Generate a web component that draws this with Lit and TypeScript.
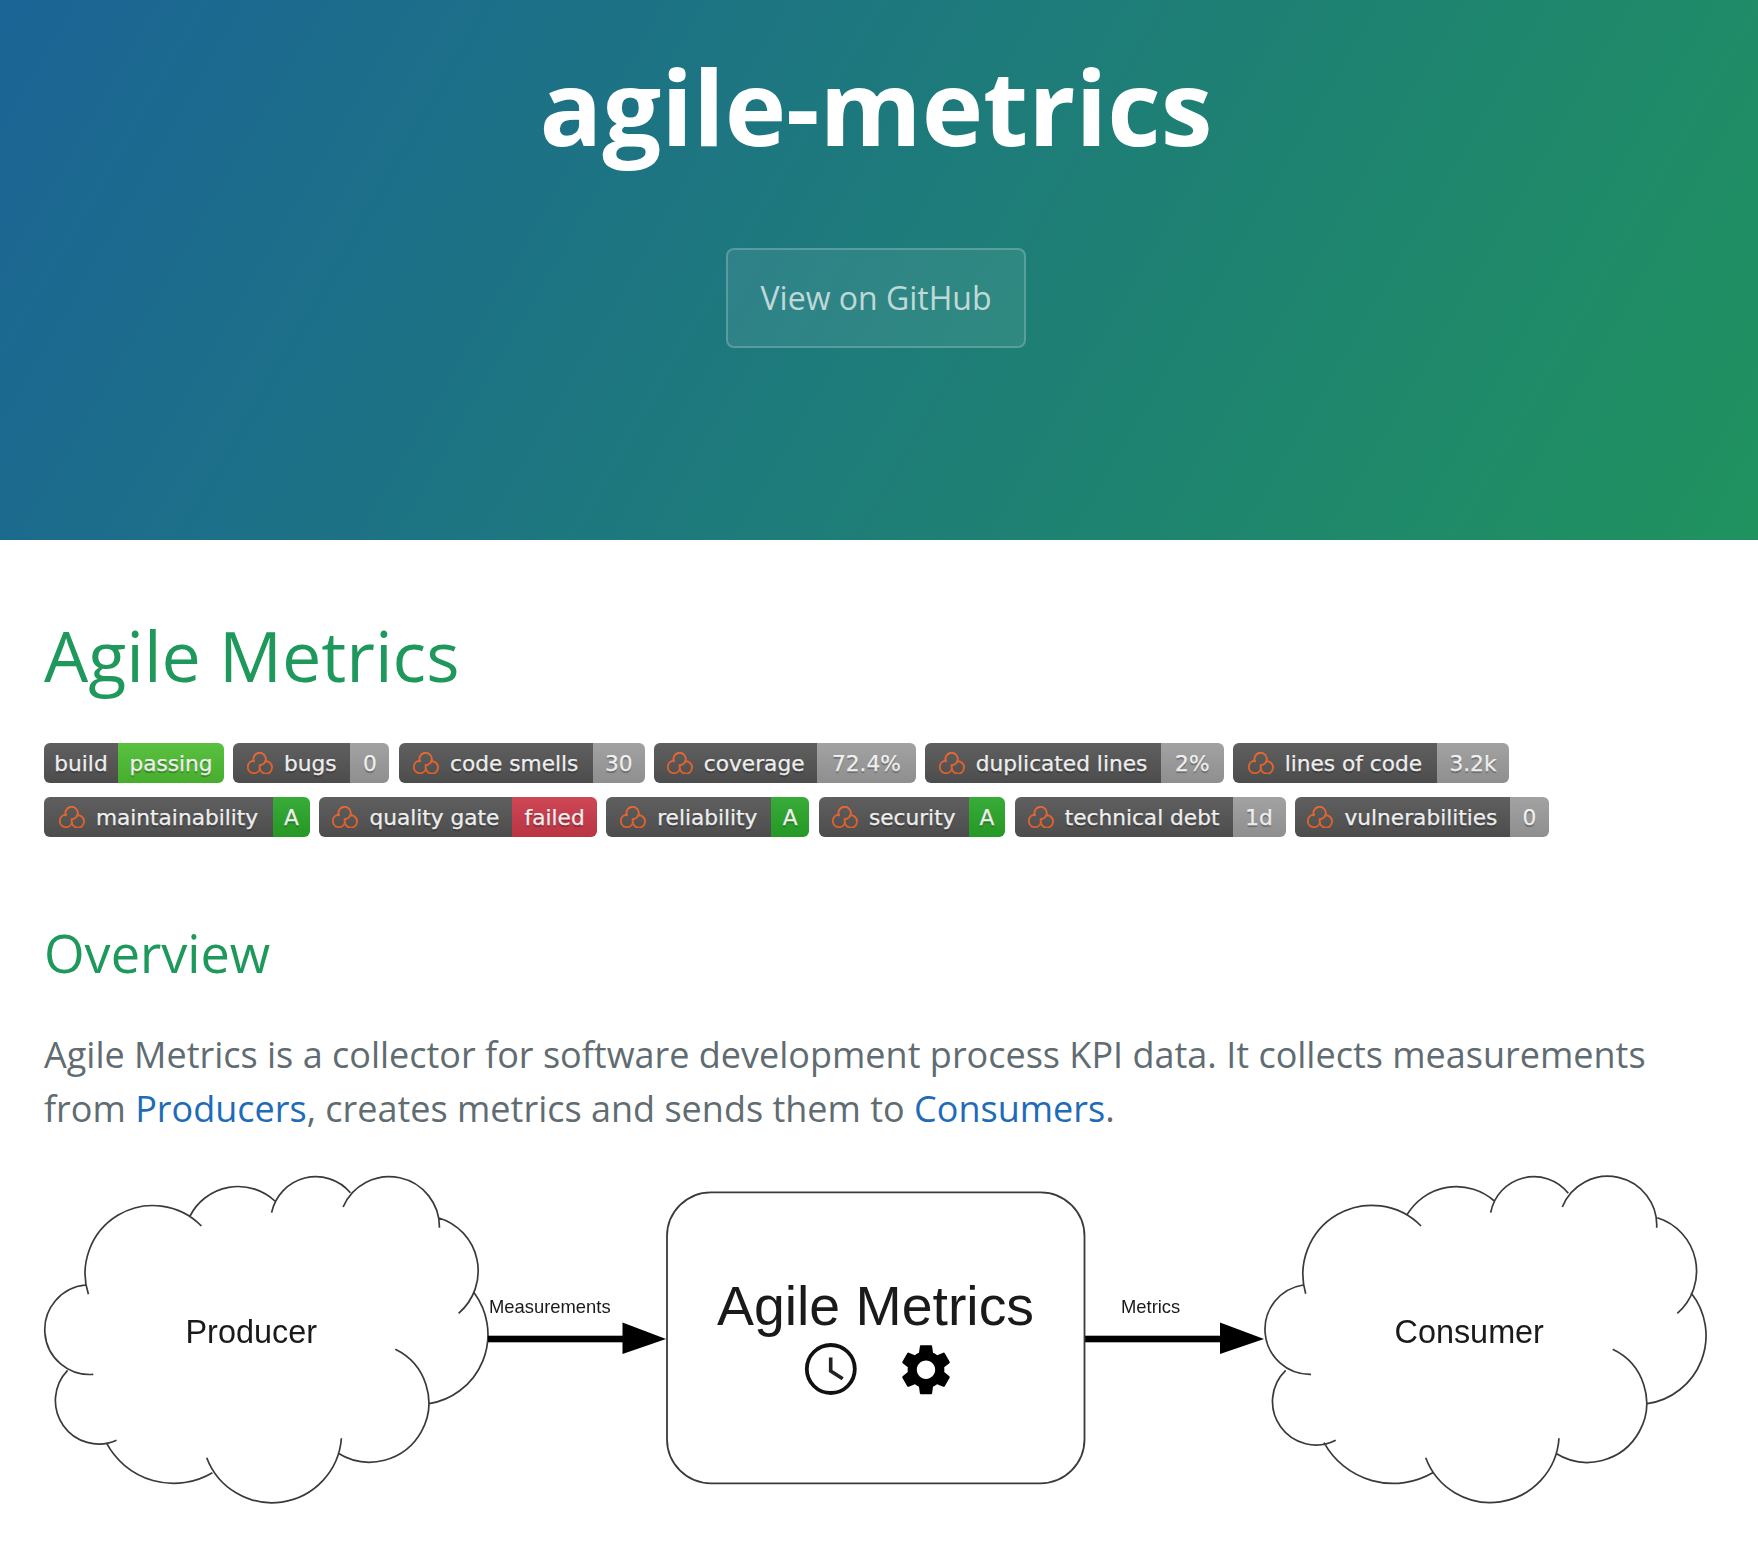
import { LitElement, html, css, svg } from 'lit'
import { customElement } from 'lit/decorators.js'

type Badge = { label: string; value: string; lw: number; vw: number; color: string; icon: boolean }
type Pt = [number, number]
type Lobe = [Pt, Pt, Pt]

const GRAY = '#9f9f9f'
const GREEN = '#2aa92a'
const RED = '#cf3a4a'

const BADGES: Badge[] = [
  { label: 'build', value: 'passing', lw: 74, vw: 106, color: '#4fc132', icon: false },
  { label: 'bugs', value: '0', lw: 117, vw: 39, color: GRAY, icon: true },
  { label: 'code smells', value: '30', lw: 194, vw: 52, color: GRAY, icon: true },
  { label: 'coverage', value: '72.4%', lw: 163, vw: 98.5, color: GRAY, icon: true },
  { label: 'duplicated lines', value: '2%', lw: 236, vw: 62.5, color: GRAY, icon: true },
  { label: 'lines of code', value: '3.2k', lw: 204, vw: 72, color: GRAY, icon: true },
  { label: 'maintainability', value: 'A', lw: 229, vw: 37, color: GREEN, icon: true },
  { label: 'quality gate', value: 'failed', lw: 193, vw: 84.5, color: RED, icon: true },
  { label: 'reliability', value: 'A', lw: 165, vw: 38, color: GREEN, icon: true },
  { label: 'security', value: 'A', lw: 150, vw: 36.5, color: GREEN, icon: true },
  { label: 'technical debt', value: '1d', lw: 218, vw: 53, color: GRAY, icon: true },
  { label: 'vulnerabilities', value: '0', lw: 215, vw: 39, color: GRAY, icon: true },
]

// cloud lobes as start / on-arc / end points, read off the reference crops
const LEFT_LOBES: Lobe[] = [
  [[143, 400], [300, 133], [420, 195]],
  [[137, 372], [35, 505], [155, 640]],
  [[92, 628], [62, 710], [212, 838]],
  [[187, 845], [350, 967], [447, 935]],
  [[433, 890], [590, 1025], [763, 832]],
  [[755, 877], [975, 730], [895, 565]],
  [[978, 728], [1122, 520], [1088, 395]],
  [[1050, 457], [1098, 330], [1000, 170]],
  [[1003, 200], [880, 47], [767, 138]],
  [[785, 95], [695, 47], [592, 155]],
  [[600, 120], [500, 77], [392, 165]],
]

const RIGHT_LOBES: Lobe[] = [
  [[197, 398], [390, 133], [543, 195]],
  [[190, 372], [73, 505], [213, 640]],
  [[137, 628], [98, 715], [287, 838]],
  [[252, 845], [450, 967], [578, 935]],
  [[557, 890], [745, 1025], [957, 832]],
  [[947, 877], [1220, 725], [1118, 565]],
  [[1222, 728], [1398, 520], [1353, 395]],
  [[1312, 457], [1370, 325], [1252, 170]],
  [[1250, 200], [1100, 47], [967, 138]],
  [[985, 97], [878, 47], [752, 155]],
  [[763, 120], [645, 77], [500, 163]],
]

function arc(a: Pt, b: Pt, c: Pt): string {
  const d = 2 * (a[0] * (b[1] - c[1]) + b[0] * (c[1] - a[1]) + c[0] * (a[1] - b[1]))
  const sa = a[0] * a[0] + a[1] * a[1]
  const sb = b[0] * b[0] + b[1] * b[1]
  const sc = c[0] * c[0] + c[1] * c[1]
  const ux = (sa * (b[1] - c[1]) + sb * (c[1] - a[1]) + sc * (a[1] - b[1])) / d
  const uy = (sa * (c[0] - b[0]) + sb * (a[0] - c[0]) + sc * (b[0] - a[0])) / d
  const r = Math.hypot(a[0] - ux, a[1] - uy)
  const cross = (b[0] - a[0]) * (c[1] - a[1]) - (b[1] - a[1]) * (c[0] - a[0])
  const sweep = cross > 0 ? 1 : 0
  const a1 = Math.atan2(a[1] - uy, a[0] - ux)
  const a3 = Math.atan2(c[1] - uy, c[0] - ux)
  let delta = sweep ? a3 - a1 : a1 - a3
  if (delta < 0) delta += Math.PI * 2
  const large = delta > Math.PI ? 1 : 0
  return `M${a[0].toFixed(1)} ${a[1].toFixed(1)}A${r.toFixed(1)} ${r.toFixed(1)} 0 ${large} ${sweep} ${c[0].toFixed(1)} ${c[1].toFixed(1)}`
}

function cloud(lobes: Lobe[], map: (p: Pt) => Pt): string {
  return lobes.map((l) => arc(map(l[0]), map(l[1]), map(l[2]))).join('')
}

const LEFT_CLOUD = cloud(LEFT_LOBES, (p) => [30 + p[0] / 2.45, 1160 + p[1] / 3])
const RIGHT_CLOUD = cloud(RIGHT_LOBES, (p) => [1240 + p[0] / 3, 1160 + p[1] / 3])

const GEAR =
  'M19.14 12.94c.04-.3.06-.61.06-.94 0-.32-.02-.64-.07-.94l2.03-1.58c.18-.14.23-.41.12-.61l-1.92-3.32c-.12-.22-.37-.29-.59-.22l-2.39.96c-.5-.38-1.03-.7-1.62-.94l-.36-2.54c-.04-.24-.24-.41-.48-.41h-3.84c-.24 0-.43.17-.47.41l-.36 2.54c-.59.24-1.13.57-1.62.94l-2.39-.96c-.22-.08-.47 0-.59.22L2.74 8.87c-.12.21-.08.47.12.61l2.03 1.58c-.05.3-.09.63-.09.94s.02.64.07.94l-2.03 1.58c-.18.14-.23.41-.12.61l1.92 3.32c.12.22.37.29.59.22l2.39-.96c.5.38 1.03.7 1.62.94l.36 2.54c.05.24.24.41.48.41h3.84c.24 0 .44-.17.47-.41l.36-2.54c.59-.24 1.13-.56 1.62-.94l2.39.96c.22.08.47 0 .59-.22l1.92-3.32c.12-.22.07-.47-.12-.61l-2.01-1.58zM12 15.6c-1.98 0-3.6-1.62-3.6-3.6s1.62-3.6 3.6-3.6 3.6 1.62 3.6 3.6-1.62 3.6-3.6 3.6z'

@customElement('app-root')
export class AppRoot extends LitElement {
  static styles = css`
    :host {
      display: block;
      font-family: 'Open Sans', sans-serif;
      background: #fff;
    }
    .header {
      height: 540px;
      box-sizing: border-box;
      padding: 36px 6px 0 0;
      background: linear-gradient(120deg, #1b6496, #20925f);
      display: flex;
      flex-direction: column;
      align-items: center;
      color: #fff;
    }
    .title {
      margin: 0;
      font-size: 104px;
      line-height: 140px;
      font-weight: 700;
    }
    .btn {
      margin-top: 72px;
      width: 300px;
      height: 100px;
      box-sizing: border-box;
      padding-bottom: 2px;
      display: flex;
      align-items: center;
      justify-content: center;
      font-size: 32px;
      color: rgba(255, 255, 255, 0.7);
      background: rgba(255, 255, 255, 0.08);
      border: 2px solid rgba(255, 255, 255, 0.2);
      border-radius: 8px;
    }
    .main {
      padding: 0 44px;
    }
    h1 {
      margin: 0;
      padding-top: 66px;
      font-size: 70px;
      line-height: 98px;
      font-weight: 400;
      color: #1f985c;
    }
    .badges {
      display: flex;
      flex-wrap: wrap;
      gap: 14px 9.4px;
      margin-top: 39px;
    }
    .badge {
      display: flex;
      height: 40px;
      border-radius: 6px;
      overflow: hidden;
      position: relative;
      font-family: 'DejaVu Sans', sans-serif;
      font-size: 21.7px;
      color: #fff;
      -webkit-text-stroke: 0.25px #fff;
      text-shadow: 0 2px 1px rgba(1, 1, 1, 0.3);
    }
    .badge::after {
      content: '';
      position: absolute;
      inset: 0;
      background: linear-gradient(rgba(187, 187, 187, 0.1), rgba(0, 0, 0, 0.1));
    }
    .seg {
      display: flex;
      align-items: center;
      justify-content: center;
      gap: 11px;
      white-space: nowrap;
    }
    .label {
      background: #555;
    }
    h2 {
      margin: 79px 0 0;
      font-size: 52.2px;
      line-height: 74px;
      font-weight: 400;
      color: #1f985c;
    }
    p {
      margin: 38px 0 0;
      font-size: 36px;
      line-height: 54px;
      color: #606c71;
    }
    a {
      color: #1e6bb8;
      text-decoration: none;
    }
    .diagram {
      display: block;
      width: 1758px;
      height: 396px;
      margin: 14.5px 0 0 -44px;
      filter: blur(0.5px);
    }
    .diagram text {
      font-family: 'Liberation Sans', Arial, sans-serif;
      fill: #1a1a1a;
    }
  `

  private sonar() {
    return html`<svg width="26" height="22" viewBox="0 0 26 22" fill="none" stroke="#f0652a" stroke-width="1.9" stroke-linecap="round">
      <path d="M6.9 9.3A6.2 6.2 0 1 1 12.5 13.2" />
      <path d="M18.3 9.3A6.2 6.2 0 1 1 13 13.4" />
      <path d="M13 16.6A6.2 6.2 0 1 1 6.9 8.8" />
    </svg>`
  }

  private badge(b: Badge) {
    return html`<div class="badge">
      <div class="seg label" style="width:${b.lw}px">${b.icon ? this.sonar() : ''}<span>${b.label}</span></div>
      <div class="seg" style="width:${b.vw}px;background:${b.color}"><span>${b.value}</span></div>
    </div>`
  }

  private diagram() {
    const stroke = '#3a3a3a'
    return html`<svg class="diagram" viewBox="0 1150 1758 396" fill="none">
      ${svg`
        <path d=${LEFT_CLOUD} stroke=${stroke} stroke-width="1.7" />
        <path d=${RIGHT_CLOUD} stroke=${stroke} stroke-width="1.7" />
        <text x="185.5" y="1341.5" font-size="32.4">Producer</text>
        <text x="1394.5" y="1341.5" font-size="32.4">Consumer</text>
        <text x="489" y="1311.5" font-size="18.4">Measurements</text>
        <text x="1121" y="1311.5" font-size="18.4">Metrics</text>
        <rect x="488" y="1334.7" width="140" height="6.6" fill="#000" />
        <path d="M622.5 1321.5L666 1338L622.5 1353Z" fill="#000" />
        <rect x="1084.5" y="1334.7" width="140" height="6.6" fill="#000" />
        <path d="M1220 1321.5L1264 1338L1220 1353Z" fill="#000" />
        <rect x="667" y="1191.3" width="417.5" height="291" rx="44" ry="44" stroke=${stroke} stroke-width="1.8" fill="#fff" />
        <text x="717" y="1324" font-size="55.4">Agile Metrics</text>
        <circle cx="830.8" cy="1368" r="24" stroke="#111" stroke-width="3.8" />
        <path d="M830.7 1356.5V1370L842.7 1377.7" stroke="#222" stroke-width="3.6" />
        <path d=${GEAR} fill="#000" transform="translate(895.4 1338.1) scale(2.55)" />
      `}
    </svg>`
  }

  render() {
    return html`
      <section class="header">
        <div class="title">agile-metrics</div>
        <div class="btn">View on GitHub</div>
      </section>
      <section class="main">
        <h1>Agile Metrics</h1>
        <div class="badges">${BADGES.map((b) => this.badge(b))}</div>
        <h2>Overview</h2>
        <p>
          Agile Metrics is a collector for software development process KPI data. It collects measurements from
          <a>Producers</a>, creates metrics and sends them to <a>Consumers</a>.
        </p>
        ${this.diagram()}
      </section>
    `
  }
}
